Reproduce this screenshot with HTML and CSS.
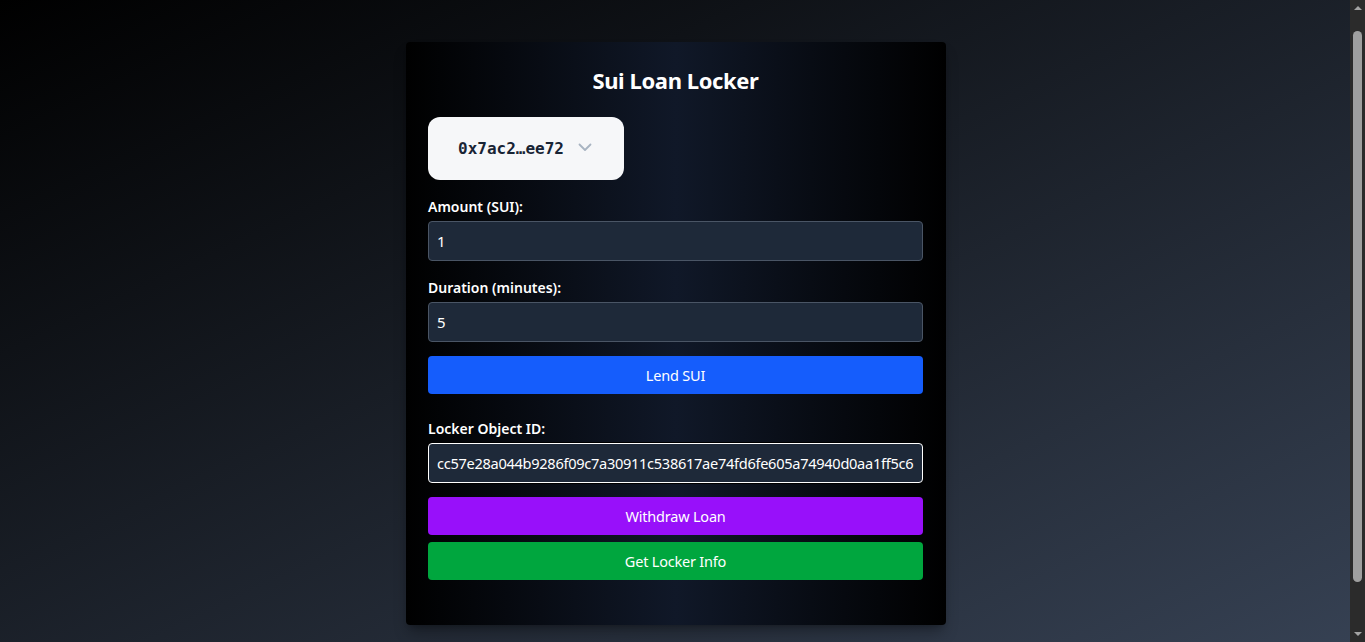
FILE: index.html
```html
<!DOCTYPE html>
<html lang="en">
<head>
<meta charset="utf-8">
<title>Sui Loan Locker</title>
<link rel="stylesheet" href="styles.css">
</head>
<body>
<main class="page">
  <section class="card">
    <h1 class="title">Sui Loan Locker</h1>
    <div class="wallet-row">
      <button class="wallet-btn" type="button">
        <span class="wallet-addr">0x7ac2…ee72</span>
        <svg class="chevron" width="14" height="9" viewBox="0 0 14 9" fill="none"><path d="M1.5 1.5 L7 7 L12.5 1.5" stroke="#a8b4c2" stroke-width="1.8" stroke-linecap="round" stroke-linejoin="round"/></svg>
      </button>
    </div>
    <label class="field-label">Amount (SUI):</label>
    <input class="field" type="text" value="1">
    <label class="field-label">Duration (minutes):</label>
    <input class="field" type="text" value="5">
    <button class="action blue" type="button">Lend SUI</button>
    <label class="field-label locker">Locker Object ID:</label>
    <input class="field focused" type="text" value="cc57e28a044b9286f09c7a30911c538617ae74fd6fe605a74940d0aa1ff5c6">
    <button class="action purple" type="button">Withdraw Loan</button>
    <button class="action green" type="button">Get Locker Info</button>
  </section>
</main>
<div class="scrollbar">
  <span class="arrow up"></span>
  <span class="thumb"></span>
  <span class="arrow down"></span>
</div>
</body>
</html>
```

FILE: styles.css
```css
html, body {
  margin: 0;
  padding: 0;
}
body {
  font-family: "Noto Sans", "Open Sans", sans-serif;
  color: #fff;
  background: linear-gradient(to bottom right, #000000, #364153);
  height: 642px;
  overflow: hidden;
}
.page {
  height: 642px;
  box-sizing: border-box;
  padding: 42px 13px 0 0;
  display: flex;
  justify-content: center;
  align-items: flex-start;
}
.card {
  width: 540px;
  box-sizing: border-box;
  padding: 22px 23px 45px 22px;
  border-radius: 4px;
  background: linear-gradient(to right, #000000, #101828, #000000);
  box-shadow: 0 10px 15px -3px rgba(0,0,0,0.3), 0 4px 6px -4px rgba(0,0,0,0.3);
  display: flex;
  flex-direction: column;
}
.title {
  margin: 0 0 21px;
  font-size: 22px;
  line-height: 32px;
  font-weight: 700;
  letter-spacing: -0.4px;
  text-align: center;
}
.wallet-row {
  display: flex;
}
.wallet-btn {
  height: 63px;
  width: 196px;
  box-sizing: border-box;
  border: none;
  border-radius: 12px;
  background: #f6f7f9;
  display: flex;
  align-items: center;
  padding: 0 0 0 30px;
  gap: 14px;
  cursor: pointer;
}
.wallet-addr {
  font-family: "DejaVu Sans Mono", "Liberation Mono", monospace;
  font-weight: 700;
  font-size: 16px;
  color: #182435;
}
.chevron {
  margin-top: -2px;
}
.field-label {
  display: block;
  font-size: 14px;
  line-height: 20px;
  font-weight: 600;
  margin: 17px 0 4px;
}
.field-label.locker {
  margin-top: 25px;
}
.field {
  height: 40px;
  box-sizing: border-box;
  width: 100%;
  border: 1px solid #4a5565;
  border-radius: 4px;
  background: #1e2939;
  color: #fff;
  font-family: "Noto Sans", "Open Sans", sans-serif;
  font-size: 15px;
  padding: 0 8px;
  outline: none;
}
.field.focused {
  border: 1px solid #ffffff;
  box-shadow: 0 0 0 1px #000;
  font-size: 14.6px;
  letter-spacing: -0.3px;
}
.action {
  height: 38px;
  width: 100%;
  border: none;
  border-radius: 4px;
  color: #fff;
  font-family: "Noto Sans", "Open Sans", sans-serif;
  font-size: 14.5px;
  letter-spacing: -0.2px;
  cursor: pointer;
  margin-top: 7px;
}
.field + .action {
  margin-top: 14px;
}
.blue { background: #155dfc; }
.purple { background: #9810fa; }
.green { background: #00a63e; }

.scrollbar {
  position: fixed;
  top: 0;
  right: 0;
  width: 15px;
  height: 642px;
  background: #2b2b2b;
  display: flex;
  flex-direction: column;
  align-items: center;
}
.arrow {
  width: 0;
  height: 0;
  border-left: 4px solid transparent;
  border-right: 4px solid transparent;
}
.arrow.up {
  margin-top: 6px;
  border-bottom: 4px solid #a3a3a3;
}
.arrow.down {
  margin-bottom: 6px;
  border-top: 4px solid #a3a3a3;
}
.thumb {
  width: 9px;
  margin: 21px 0 50px;
  flex: 1;
  border-radius: 5px;
  background: #9f9f9f;
}
```
